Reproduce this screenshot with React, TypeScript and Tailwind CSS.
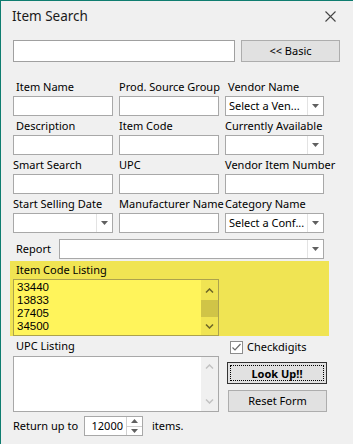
import React from 'react';

const Arrow = () => (
  <svg width="7" height="4" viewBox="0 0 7 4">
    <path d="M0 0 L7 0 L3.5 4 Z" fill="#606060" />
  </svg>
);

const TextBox = ({ w = 'w-full' }: { w?: string }) => (
  <div className={`${w} h-[20px] bg-white border border-[#a8a8a8]`} />
);

const Combo = ({ text = '', w = 'w-full' }: { text?: string; w?: string }) => (
  <div className={`${w} h-[20px] bg-white border border-[#a8a8a8] flex`}>
    <div className="flex-1 pl-[3px] leading-[18px] whitespace-nowrap overflow-hidden">{text}</div>
    <div className="w-[16px] border-l border-[#e3e3e3] flex items-center justify-center">
      <Arrow />
    </div>
  </div>
);

const Field = ({ label, indent = false, children }: { label: string; indent?: boolean; children: React.ReactNode }) => (
  <div className="flex flex-col">
    <div className={`h-[19px] flex items-end pb-[2px] leading-[14px] whitespace-nowrap ${indent ? 'pl-[3px]' : ''}`}>
      {label}
    </div>
    {children}
  </div>
);

const Chevron = ({ up, color }: { up: boolean; color: string }) => (
  <svg width="9" height="5" viewBox="0 0 9 5">
    <path d={up ? 'M1 4.5 L4.5 1 L8 4.5' : 'M1 0.5 L4.5 4 L8 0.5'} stroke={color} strokeWidth="1.5" fill="none" />
  </svg>
);

export default function App() {
  const codes = ['33440', '13833', '27405', '34500', '34502'];

  return (
    <div className="w-[353px] h-[444px] bg-[#f0f0f0] border-t border-l border-[#0f7d70] font-['Noto_Sans',sans-serif] text-[11px] text-black overflow-hidden">
      {/* Title bar */}
      <div className="h-[31px] flex items-center justify-between pl-[11px] pr-[17px]">
        <span className="text-[13.5px] text-[#1a1a1a]">Item Search</span>
        <svg width="11" height="11" viewBox="0 0 11 11">
          <path d="M0.5 0.5 L10.5 10.5 M10.5 0.5 L0.5 10.5" stroke="#444" strokeWidth="1.1" />
        </svg>
      </div>

      {/* Search row */}
      <div className="mt-[8px] pl-[12px] flex gap-[6px]">
        <div className="w-[222px] h-[22px] bg-white border border-[#a0a0a0]" />
        <button className="w-[99px] h-[22px] bg-[#e1e1e1] border border-[#adadad] leading-[20px]">
          &lt;&lt; Basic
        </button>
      </div>

      {/* Fields */}
      <div className="mt-[15px] pl-[12px] grid grid-cols-[100px_100px_99px] gap-x-[6px]">
        <Field label="Item Name" indent><TextBox /></Field>
        <Field label="Prod. Source Group"><TextBox /></Field>
        <Field label="Vendor Name" indent><Combo text="Select a Ven..." /></Field>

        <Field label="Description" indent><TextBox /></Field>
        <Field label="Item Code"><TextBox /></Field>
        <Field label="Currently Available"><Combo /></Field>

        <Field label="Smart Search"><TextBox /></Field>
        <Field label="UPC"><TextBox /></Field>
        <Field label="Vendor Item Number"><TextBox /></Field>

        <Field label="Start Selling Date"><Combo /></Field>
        <Field label="Manufacturer Name"><TextBox /></Field>
        <Field label="Category Name"><Combo text="Select a Conf..." /></Field>
      </div>

      {/* Report */}
      <div className="mt-[6px] flex items-center pl-[15px]">
        <span className="w-[43px]">Report</span>
        <Combo w="w-[265px]" />
      </div>

      {/* Item Code Listing */}
      <div className="mt-[2px] ml-[9px] w-[319px] h-[75px] bg-[#f0e453] flex flex-col">
        <div className="pl-[6px] pt-[2px] leading-[14px]">Item Code Listing</div>
        <div className="mt-[2px] ml-[3px] w-[206px] h-[57px] bg-[#fff45b] border border-[#aca24c] flex overflow-hidden">
          <div className="flex-1 pl-[3px] pt-[1px] leading-[13px] font-['Liberation_Sans',sans-serif] text-[11.5px]">
            {codes.map((c) => (
              <div key={c}>{c}</div>
            ))}
          </div>
          <div className="w-[17px] bg-[#f0e453] flex flex-col items-center">
            <div className="h-[20px] flex items-center justify-center"><Chevron up color="#6d6625" /></div>
            <div className="w-[17px] h-[17px] bg-[#d0c447]" />
            <div className="flex-1 flex items-center justify-center"><Chevron up={false} color="#6d6625" /></div>
          </div>
        </div>
      </div>

      {/* Bottom */}
      <div className="flex pl-[12px]">
        <div className="w-[206px] flex flex-col">
          <div className="pl-[3px] pt-[3px] leading-[14px]">UPC Listing</div>
          <div className="mt-[3px] h-[56px] bg-white border border-[#a8a8a8] flex">
            <div className="flex-1" />
            <div className="w-[17px] bg-[#f0f0f0] flex flex-col items-center justify-between py-[7px]">
              <Chevron up color="#c2c2c2" />
              <Chevron up={false} color="#c2c2c2" />
            </div>
          </div>
        </div>
        <div className="ml-[8px] flex flex-col">
          <div className="mt-[5px] ml-[3px] flex items-center gap-[4px] h-[12px]">
            <svg width="13" height="13" viewBox="0 0 13 13">
              <rect x="0.5" y="0.5" width="12" height="12" fill="#fff" stroke="#8c8c8c" />
              <path d="M2.5 6.5 L5 9 L10.5 3" stroke="#6a6a6a" strokeWidth="1.2" fill="none" />
            </svg>
            <span className="leading-[14px]">Checkdigits</span>
          </div>
          <button className="mt-[9px] w-[100px] h-[22px] bg-[#e1e1e1] border border-[#333] p-[2px]">
            <div className="w-full h-full border border-dotted border-black font-bold leading-[15px]">Look Up!!</div>
          </button>
          <button className="mt-[6px] ml-[1px] w-[99px] h-[22px] bg-[#e1e1e1] border border-[#adadad] leading-[20px]">
            Reset Form
          </button>
        </div>
      </div>

      {/* Return up to */}
      <div className="mt-[4px] pl-[12px] flex items-center">
        <span className="w-[71px]">Return up to</span>
        <div className="w-[59px] h-[20px] bg-white border border-[#a8a8a8] flex">
          <div className="flex-1 text-right pr-[3px] leading-[18px]">12000</div>
          <div className="w-[16px] border-l border-[#d0d0d0] flex flex-col">
            <div className="flex-1 flex items-center justify-center border-b border-[#d0d0d0]">
              <svg width="7" height="4" viewBox="0 0 7 4"><path d="M0 4 L7 4 L3.5 0 Z" fill="#606060" /></svg>
            </div>
            <div className="flex-1 flex items-center justify-center"><Arrow /></div>
          </div>
        </div>
        <span className="ml-[9px]">items.</span>
      </div>
    </div>
  );
}
